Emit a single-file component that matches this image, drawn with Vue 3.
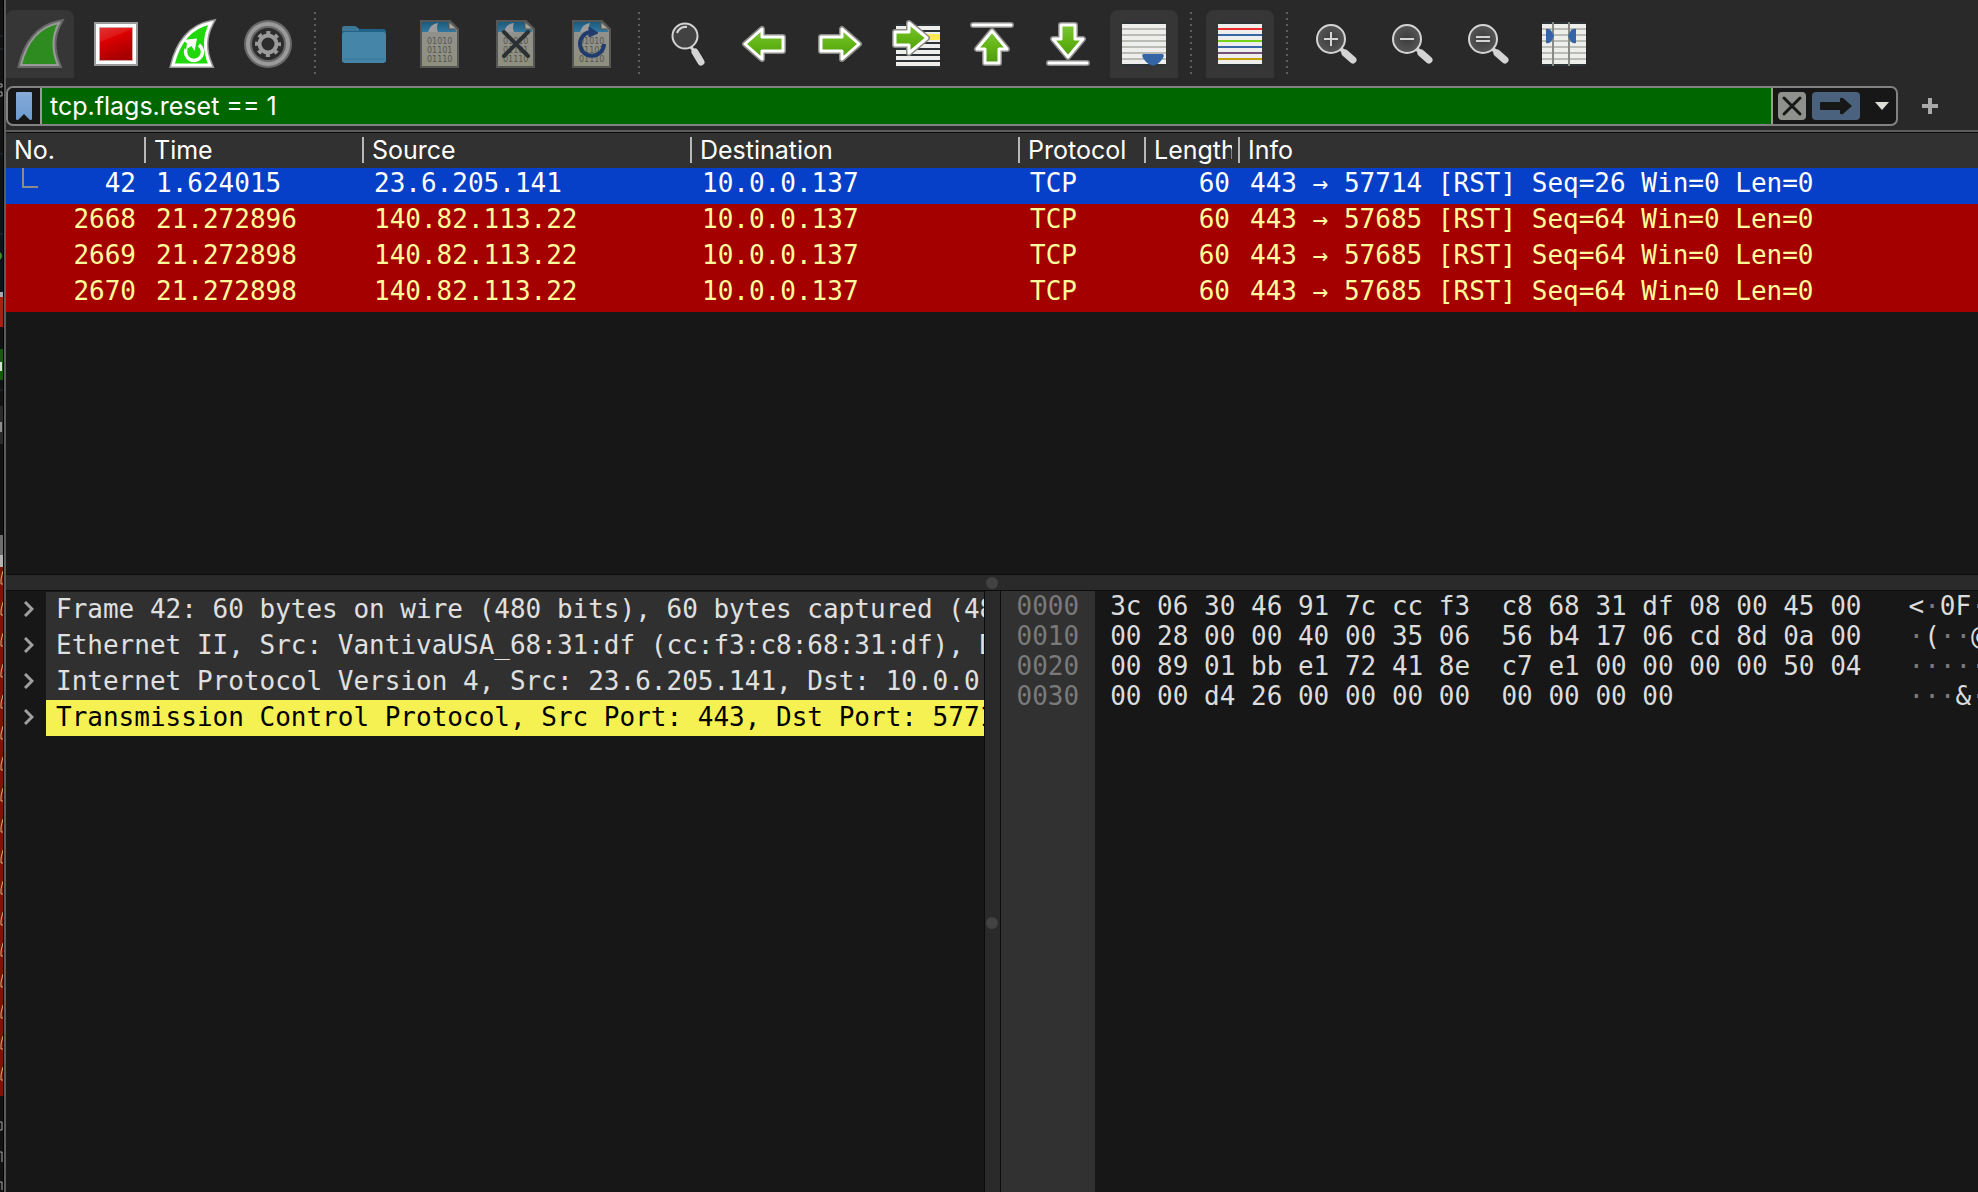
<script setup>
import { ref } from 'vue'

const filter = ref('tcp.flags.reset == 1')

const tools = [
  { icon: 'start', label: 'Start capturing packets', checked: true },
  { icon: 'stop', label: 'Stop capturing packets' },
  { icon: 'restart', label: 'Restart current capture' },
  { icon: 'options', label: 'Capture options' },
  { sep: true },
  { icon: 'open', label: 'Open a capture file' },
  { icon: 'save', label: 'Save this capture file' },
  { icon: 'close', label: 'Close this capture file' },
  { icon: 'reload', label: 'Reload this file' },
  { sep: true },
  { icon: 'find', label: 'Find a packet' },
  { icon: 'prev', label: 'Go to previous packet' },
  { icon: 'next', label: 'Go to next packet' },
  { icon: 'goto', label: 'Go to specified packet' },
  { icon: 'first', label: 'Go to first packet' },
  { icon: 'last', label: 'Go to last packet' },
  { icon: 'auto', label: 'Auto scroll in live capture', checked: true },
  { sep: true },
  { icon: 'colorize', label: 'Colorize packet list', checked: true },
  { sep: true },
  { icon: 'zoomin', label: 'Enlarge text' },
  { icon: 'zoomout', label: 'Shrink text' },
  { icon: 'zoomreset', label: 'Normal text size' },
  { icon: 'columns', label: 'Resize columns' }
]

const columns = ['No.', 'Time', 'Source', 'Destination', 'Protocol', 'Length', 'Info']

const packets = [
  { no: 42, time: '1.624015', src: '23.6.205.141', dst: '10.0.0.137', proto: 'TCP', len: 60, info: '443 → 57714 [RST] Seq=26 Win=0 Len=0', selected: true },
  { no: 2668, time: '21.272896', src: '140.82.113.22', dst: '10.0.0.137', proto: 'TCP', len: 60, info: '443 → 57685 [RST] Seq=64 Win=0 Len=0' },
  { no: 2669, time: '21.272898', src: '140.82.113.22', dst: '10.0.0.137', proto: 'TCP', len: 60, info: '443 → 57685 [RST] Seq=64 Win=0 Len=0' },
  { no: 2670, time: '21.272898', src: '140.82.113.22', dst: '10.0.0.137', proto: 'TCP', len: 60, info: '443 → 57685 [RST] Seq=64 Win=0 Len=0' }
]

const layers = [
  { text: 'Frame 42: 60 bytes on wire (480 bits), 60 bytes captured (480' },
  { text: 'Ethernet II, Src: VantivaUSA_68:31:df (cc:f3:c8:68:31:df), Dst' },
  { text: 'Internet Protocol Version 4, Src: 23.6.205.141, Dst: 10.0.0.137' },
  { text: 'Transmission Control Protocol, Src Port: 443, Dst Port: 57714', active: true }
]

const dump = [
  { offset: '0000', hex: '3c 06 30 46 91 7c cc f3  c8 68 31 df 08 00 45 00', ascii: '<·0F·' },
  { offset: '0010', hex: '00 28 00 00 40 00 35 06  56 b4 17 06 cd 8d 0a 00', ascii: '·(··@' },
  { offset: '0020', hex: '00 89 01 bb e1 72 41 8e  c7 e1 00 00 00 00 50 04', ascii: '·····' },
  { offset: '0030', hex: '00 00 d4 26 00 00 00 00  00 00 00 00', ascii: '···&·' }
]

const fin = 'M5 45C10 24 22 7 43 3C36 16 36 31 42 45Z'
const arrows = {
  prev: 'M5 24L22 9V17H43V31H22V39Z',
  next: 'M43 24L26 9V17H5V31H26V39Z',
  goto: 'M3 12H17V3L35 18L17 33V25H3Z',
  first: 'M24 11L9 29H17V43H31V29H39Z',
  last: 'M17 5V19H9L24 37L39 19H31V5Z'
}
const lineRows = [8, 14, 20, 26, 32, 38]
const ruleColors = ['#ef2929', '#3465a4', '#73d216', '#3465a4', '#75507b', '#c4a000']
const marks = Array.from({ length: 17 }, (_, i) => 571 + i * 31)
</script>

<template>
  <div class="screen">
    <svg class="backdrop" width="4" height="1192" aria-hidden="true">
      <rect width="4" height="1192" fill="#101214" />
      <path d="M0 36H3M0 49H3M0 154H3M0 234H3M0 390H3" stroke="#2b2f33" />
      <path d="M0 84h2v3h-2M0 92h2v4h-2" stroke="#a8a8a8" fill="none" />
      <circle cx="-2" cy="256" r="4" fill="#3c8c28" />
      <rect y="292" width="3" height="5" fill="#a8a8a8" />
      <rect y="297" width="3" height="30" fill="#a32310" />
      <rect y="349" width="3" height="31" fill="#175a0e" />
      <rect y="362" width="2" height="9" fill="#dcdcdc" />
      <rect y="406" width="3" height="38" fill="#2b2b2b" />
      <rect y="422" width="2" height="10" fill="#8d8d8d" />
      <rect y="535" width="3" height="20" fill="#6d6d6d" />
      <rect y="555" width="3" height="12" fill="#b4b4b4" />
      <rect y="567" width="3" height="529" fill="#7b1500" />
      <path v-for="y in marks" :key="y" :d="`M3 ${y}L1 ${y + 8}V${y + 13}H3`" fill="none" stroke="#c9b871" />
      <path d="M0 1122h2v8h-2M0 1152h2v10M0 1182h2v8" stroke="#a8a8a8" fill="none" />
      <rect x="3" width="1" height="1192" fill="#000" />
    </svg>

    <main class="window">
      <svg width="0" height="0" class="defs" aria-hidden="true">
        <defs>
          <linearGradient id="red" x1="0" y1="0" x2="0.4" y2="1">
            <stop offset="0" stop-color="#e23030" /><stop offset="0.35" stop-color="#e01818" />
            <stop offset="0.4" stop-color="#dc0000" /><stop offset="1" stop-color="#a80000" />
          </linearGradient>
          <linearGradient id="green" x1="0" y1="0" x2="0" y2="1">
            <stop offset="0" stop-color="#7cc63a" /><stop offset="0.5" stop-color="#62b414" /><stop offset="1" stop-color="#4f9a10" />
          </linearGradient>
          <linearGradient id="paper" x1="0" y1="0" x2="0" y2="1">
            <stop offset="0" stop-color="#929292" /><stop offset="1" stop-color="#8f8f7e" />
          </linearGradient>
          <linearGradient id="sea" x1="0" y1="0" x2="0" y2="1">
            <stop offset="0" stop-color="#1c5a7c" /><stop offset="1" stop-color="#3278a0" />
          </linearGradient>
          <linearGradient id="mark" x1="0" y1="0" x2="0" y2="1">
            <stop offset="0" stop-color="#85abd8" /><stop offset="1" stop-color="#6c9bd0" />
          </linearGradient>
          <radialGradient id="lens">
            <stop offset="0" stop-color="#3c3c3c" /><stop offset="1" stop-color="#565656" />
          </radialGradient>
        </defs>
      </svg>

      <div class="toolbar" role="toolbar" aria-label="Main toolbar">
        <template v-for="(t, i) in tools" :key="i">
          <span v-if="t.sep" class="sep"></span>
          <button v-else type="button" class="tool" :class="{ checked: t.checked }" :aria-label="t.label">
            <svg width="48" height="48" viewBox="0 0 48 48" fill="none" aria-hidden="true">
              <g v-if="t.icon === 'start'">
                <path :d="fin" stroke="#686868" stroke-width="6" />
                <path :d="fin" fill="#2d8b20" stroke="#9a9a9a" stroke-width="2" />
              </g>
              <g v-else-if="t.icon === 'stop'">
                <rect x="2" y="2" width="44" height="44" fill="#9a9a9a" />
                <rect x="4" y="4" width="40" height="40" fill="#fff" />
                <rect x="7" y="7" width="34" height="34" fill="#d9a0a0" />
                <rect x="8" y="8" width="32" height="32" fill="url(#red)" />
              </g>
              <g v-else-if="t.icon === 'restart'">
                <path :d="fin" stroke="#9a9a9a" stroke-width="6" />
                <path :d="fin" fill="#1fd70b" stroke="#fff" stroke-width="3" />
                <path d="M18 29A8.500 8.500 0 1 0 31 25" stroke="#fff" stroke-width="3.500" />
                <path d="M15 20L29 18.500L26.500 31L23.500 26L18 29.500L19 23.500Z" fill="#fff" />
              </g>
              <g v-else-if="t.icon === 'options'">
                <circle cx="24" cy="24" r="24" fill="#686868" />
                <circle cx="24" cy="24" r="22" fill="#9a9a9a" />
                <circle cx="24" cy="24" r="18" fill="#686868" />
                <circle cx="24" cy="24" r="16" fill="#2c2c2c" />
                <circle cx="24" cy="24" r="8.500" stroke="#9a9a9a" stroke-width="4" />
                <circle cx="24" cy="24" r="11.500" stroke="#9a9a9a" stroke-width="3" stroke-dasharray="4.200 4.830" stroke-dashoffset="2.100" />
              </g>
              <g v-else-if="t.icon === 'open'">
                <path d="M2 9Q2 6 5 6H14Q16 6 18 8L19 9H43Q46 9 46 12V20H2Z" fill="#1f6389" />
                <path d="M2 9Q2 6 5 6H14Q16 6 18 8L19 9V11H2Z" fill="#3d7898" />
                <rect x="2" y="12" width="44" height="31" rx="3" fill="#4485a8" />
                <path d="M3 39H45" stroke="#3b7797" />
              </g>
              <g v-else-if="['save', 'close', 'reload'].includes(t.icon)">
                <path d="M5 1H34L42 9V47H5Z" fill="url(#paper)" stroke="#565654" stroke-width="2" />
                <path d="M6 2H33L41 12H6Z" fill="url(#sea)" />
                <path d="M12 12Q14 4 22 3Q20 7 22 12Z" fill="#9c9c9c" />
                <path d="M33 2V9H41Z" fill="#a5a598" stroke="#565654" />
                <g class="bits">
                  <text x="11" y="24">01010</text>
                  <text x="11" y="33">01101</text>
                  <text x="11" y="42">01110</text>
                </g>
                <path v-if="t.icon === 'close'" d="M12 12L36 36M36 12L12 36" stroke="#2b3032" stroke-width="4" stroke-linecap="round" />
                <g v-if="t.icon === 'reload'">
                  <path d="M36 24A12 12 0 1 1 22 12" stroke="#203c6c" stroke-width="4" />
                  <path d="M21 7L30 13L21 17Z" fill="#203c6c" stroke="#203c6c" />
                </g>
              </g>
              <g v-else-if="t.icon === 'find'">
                <path d="M27 27L30 31" stroke="#d4d4d4" stroke-width="3" />
                <path d="M31 32L37 42" stroke="#d4d4d4" stroke-width="7" stroke-linecap="round" />
                <circle cx="21" cy="16" r="12.500" fill="#424242" stroke="#d4d4d4" stroke-width="2" />
                <path d="M13 13Q16 6 23 7" stroke="#d4d4d4" stroke-width="2" />
              </g>
              <g v-else-if="arrows[t.icon]" stroke-linejoin="round" stroke-linecap="round">
                <g v-if="t.icon === 'goto'">
                  <path d="M4 4H48V6H4ZM4 10H48V12H4ZM4 22H48V24H4ZM4 28H48V30H4ZM4 34H48V36H4ZM4 40H48V42H4ZM4 46H48V48H4Z" fill="#2e3436" />
                  <path d="M4 6H48V10H4ZM4 12H48V22H4ZM4 24H48V28H4ZM4 30H48V34H4ZM4 36H48V40H4ZM4 42H48V46H4Z" fill="#eeeeec" />
                  <path d="M20 14H48V20H20Z" fill="#fce94f" />
                </g>
                <g v-if="t.icon === 'first' || t.icon === 'last'">
                  <path :d="t.icon === 'first' ? 'M5 5H43' : 'M5 43H43'" stroke="#888a85" stroke-width="6" />
                  <path :d="t.icon === 'first' ? 'M5 5H43' : 'M5 43H43'" stroke="#fff" stroke-width="3" />
                </g>
                <path :d="arrows[t.icon]" stroke="#888a85" stroke-width="6" />
                <path :d="arrows[t.icon]" fill="url(#green)" stroke="#fff" stroke-width="3" />
              </g>
              <g v-else-if="['auto', 'colorize', 'columns'].includes(t.icon)">
                <rect x="2" y="2" width="44" height="44" fill="#2e3436" />
                <rect x="2" y="4" width="44" height="40" fill="#eeeeec" />
                <rect v-for="(y, n) in lineRows" :key="y" x="2" :y="y" width="44" height="2" :fill="t.icon === 'colorize' ? ruleColors[n] : '#babdb6'" />
                <path v-if="t.icon === 'auto'" d="M24 34H42Q45 34 43 38Q39 44 35 45Q33 46 31 45Q27 44 23 38Q21 34 24 34Z" fill="#3465a4" />
                <g v-if="t.icon === 'columns'">
                  <path d="M13 2V46M29 2V46" stroke="#888a85" stroke-width="2" />
                  <path d="M6 9Q10 8 12 12L14 16L12 20Q10 24 6 23ZM36 9Q32 8 30 12L28 16L30 20Q32 24 36 23Z" fill="#3465a4" />
                </g>
              </g>
              <g v-else>
                <path d="M28 28L33 33" stroke="#d4d4d4" stroke-width="4" />
                <path d="M33 33L41 40" stroke="#d4d4d4" stroke-width="7" stroke-linecap="round" />
                <circle cx="19" cy="19" r="14" fill="url(#lens)" stroke="#d4d4d4" stroke-width="2" />
                <path v-if="t.icon === 'zoomin'" d="M12 19H26M19 12V26" stroke="#d4d4d4" stroke-width="2" />
                <path v-else-if="t.icon === 'zoomout'" d="M12 19H26" stroke="#d4d4d4" stroke-width="2" />
                <path v-else d="M12 17H26M12 21H26" stroke="#d4d4d4" stroke-width="2" />
              </g>
            </svg>
          </button>
        </template>
      </div>

      <div class="filterbar">
        <div class="filterbox">
          <button type="button" class="bookmark" aria-label="Manage saved bookmarks">
            <svg width="16" height="28" viewBox="0 0 16 28" aria-hidden="true">
              <path d="M0 1Q0 0 1 0H15Q16 0 16 1V27Q15 29 14 28L8 22L2 28Q1 29 0 27Z" fill="url(#mark)" />
            </svg>
          </button>
          <input v-model="filter" class="filter" type="text" aria-label="Display filter" spellcheck="false" />
          <div class="actions">
            <button type="button" class="clear" aria-label="Clear filter">
              <svg width="28" height="28" viewBox="0 0 28 28" aria-hidden="true">
                <path d="M6 6L22 22M22 6L6 22" stroke="#171717" stroke-width="3" stroke-linecap="round" />
              </svg>
            </button>
            <button type="button" class="apply" aria-label="Apply filter">
              <svg width="48" height="28" viewBox="0 0 48 28" aria-hidden="true">
                <path d="M9 10H28V7Q28 5 31 6L40 14L31 22Q28 23 28 21V18H9Q8 18 8 17V11Q8 10 9 10Z" fill="#171717" />
              </svg>
            </button>
            <button type="button" class="recent" aria-label="Recent filters">
              <svg width="14" height="8" viewBox="0 0 14 8" aria-hidden="true"><path d="M0 0H14L7 8Z" fill="#deded8" /></svg>
            </button>
          </div>
        </div>
        <button type="button" class="add" aria-label="Add a display filter button">
          <svg width="16" height="16" viewBox="0 0 16 16" aria-hidden="true"><path d="M8 0V16M0 8H16" stroke="#a9a9a9" stroke-width="4" /></svg>
        </button>
      </div>

      <section class="list" aria-label="Packet list">
        <table>
          <colgroup>
            <col class="c-no" /><col class="c-time" /><col class="c-addr" /><col class="c-addr" /><col class="c-proto" /><col class="c-len" /><col />
          </colgroup>
          <thead>
            <tr>
              <th v-for="c in columns" :key="c" scope="col"><div class="head"><span>{{ c }}</span></div></th>
            </tr>
          </thead>
          <tbody>
            <tr v-for="p in packets" :key="p.no" :class="{ selected: p.selected }">
              <td>
                <div class="number"><span class="related" :class="{ shown: p.selected }"></span>{{ p.no }}</div>
              </td>
              <td>{{ p.time }}</td>
              <td>{{ p.src }}</td>
              <td>{{ p.dst }}</td>
              <td>{{ p.proto }}</td>
              <td class="right">{{ p.len }}</td>
              <td>{{ p.info }}</td>
            </tr>
          </tbody>
        </table>
      </section>

      <div class="hsplit"><span class="grip"></span></div>

      <div class="lower">
        <ul class="tree">
          <li v-for="l in layers" :key="l.text">
            <button type="button" class="expander" aria-label="Expand">
              <svg width="10" height="16" viewBox="0 0 10 16" fill="none" aria-hidden="true"><path d="M1 1L8 8L1 15" stroke="#a0a0a0" stroke-width="3" /></svg>
            </button>
            <span class="layer" :class="{ active: l.active }">{{ l.text }}</span>
          </li>
        </ul>
        <div class="vsplit"><span class="grip"></span></div>
        <div class="bytes">
          <div class="offsets"><div v-for="d in dump" :key="d.offset">{{ d.offset }}</div></div>
          <div class="hex"><div v-for="d in dump" :key="d.offset">{{ d.hex }}</div></div>
          <div class="ascii">
            <div v-for="d in dump" :key="d.offset"><span v-for="(ch, k) in d.ascii" :key="k" :class="{ dim: ch === '·' }">{{ ch }}</span></div>
          </div>
        </div>
      </div>
    </main>
  </div>
</template>

<style>
body {
  background: #171717;
}
</style>

<style scoped>
.screen {
  display: flex;
  height: 100vh;
  overflow: hidden;
  font-family: Inter, "Liberation Sans", sans-serif;
  font-size: 25px;
  color: #fff;
}
.backdrop {
  flex: none;
  display: block;
}
.window {
  flex: 1;
  min-width: 0;
  display: flex;
  flex-direction: column;
  border-left: 2px solid #5c5c5c;
  background: #292929;
}
.defs {
  display: block;
}
button {
  padding: 0;
  border: 0;
  background: none;
  display: flex;
  align-items: center;
  justify-content: center;
}
.toolbar {
  display: flex;
  gap: 8px;
  padding: 10px 0 8px;
}
.tool {
  flex: none;
  width: 68px;
  height: 68px;
}
.tool.checked {
  background: #363636;
  border-radius: 8px 8px 0 0;
}
.tool svg {
  overflow: visible;
}
.sep {
  width: 2px;
  height: 62px;
  margin: 2px 6px 0 4px;
  background: repeating-linear-gradient(#5e5e5e 0 2px, transparent 2px 6px);
}
.bits {
  font: 8px "DejaVu Sans", sans-serif;
  fill: #565650;
}
.filterbar {
  display: flex;
  align-items: center;
  padding-bottom: 4px;
}
.filterbox {
  flex: 1;
  display: flex;
  height: 36px;
  border: 2px solid #828282;
  border-radius: 7px;
  background: #171717;
  overflow: hidden;
}
.bookmark {
  width: 32px;
}
.filter {
  flex: 1;
  min-width: 0;
  padding: 0 8px;
  border: 0;
  border-left: 2px solid #9a9a9a;
  border-right: 2px solid #9a9a9a;
  background: #006600;
  color: #fff;
  font: inherit;
  outline: none;
}
.actions {
  display: flex;
  align-items: center;
  gap: 6px;
  padding: 0 2px 0 5px;
}
.clear {
  border-radius: 4px;
  background: #8f918c;
}
.apply {
  border-radius: 4px;
  background: #4a627e;
}
.recent {
  width: 24px;
  height: 28px;
  margin-left: 4px;
}
.add {
  width: 32px;
  height: 32px;
  margin: 0 32px 0 16px;
}
.list {
  flex: 442 1 0;
  border-top: 2px solid #5a5a5a;
  box-shadow: inset 0 1px #0c0c0c;
  background: #171717;
  overflow: hidden;
}
table {
  width: 100%;
  margin-top: 1px;
  table-layout: fixed;
  border-collapse: collapse;
}
.c-no { width: 140px; }
.c-time { width: 218px; }
.c-addr { width: 328px; }
.c-proto { width: 126px; }
.c-len { width: 94px; }
th {
  height: 35px;
  padding: 0;
  background: #313131;
  font-weight: 400;
  text-align: left;
}
.head {
  height: 26px;
  margin-bottom: 1px;
  padding: 0 6px 0 8px;
  border-right: 2px solid #b8b8b8;
  line-height: 26px;
}
.head span {
  display: block;
  overflow-x: clip;
  white-space: nowrap;
}
th:last-child .head {
  border-right: 0;
}
td {
  height: 30px;
  padding: 0 10px 6px;
  font: 26px/30px "DejaVu Sans Mono", monospace;
  white-space: nowrap;
  background: #a40000;
  color: #fffc9c;
}
.selected td {
  background: #0640c8;
  color: #fff;
}
td.right {
  text-align: right;
}
.number {
  display: flex;
  justify-content: space-between;
  padding-left: 6px;
}
.related {
  width: 14px;
  height: 18px;
}
.related.shown {
  border-left: 2px solid #8c8c8c;
  border-bottom: 2px solid #8c8c8c;
}
.hsplit {
  height: 15px;
  display: flex;
  align-items: center;
  justify-content: center;
  border-top: 1px solid #0c0c0c;
  border-bottom: 1px solid #0c0c0c;
  background: #2a2a2a;
}
.grip {
  width: 12px;
  height: 12px;
  border-radius: 50%;
  background: #424242;
}
.lower {
  flex: 601 1 0;
  display: flex;
  min-height: 0;
}
.tree {
  flex: 1;
  min-width: 0;
  margin: 0;
  padding: 1px 0 0;
  list-style: none;
  background: #171717;
  font: 26px/34px "DejaVu Sans Mono", monospace;
  overflow: hidden;
}
.tree li {
  display: flex;
  height: 36px;
}
.expander {
  flex: none;
  width: 40px;
  padding: 0 0 2px 6px;
}
.layer {
  flex: 1;
  min-width: 0;
  padding-left: 10px;
  background: #303030;
  color: #e0e0e0;
  white-space: nowrap;
  overflow: hidden;
}
.layer.active {
  background: #f6f153;
  color: #000;
}
.vsplit {
  width: 15px;
  display: flex;
  flex-direction: column;
  align-items: center;
  border-left: 1px solid #0c0c0c;
  border-right: 1px solid #0c0c0c;
  background: #2a2a2a;
}
.vsplit::before {
  content: "";
  flex: 325;
}
.vsplit::after {
  content: "";
  flex: 263;
}
.bytes {
  flex: 1;
  min-width: 0;
  display: flex;
  background: #171717;
  color: #dcdcdc;
  font: 26px/30px "DejaVu Sans Mono", monospace;
  white-space: pre;
  overflow: hidden;
}
.offsets {
  flex: none;
  padding: 0 16px;
  background: #313131;
  color: #7a7a7a;
}
.hex {
  flex: none;
  padding: 0 47px 0 15px;
}
.ascii {
  flex: 1;
  min-width: 0;
}
.dim {
  color: #7a7a7a;
}
</style>
